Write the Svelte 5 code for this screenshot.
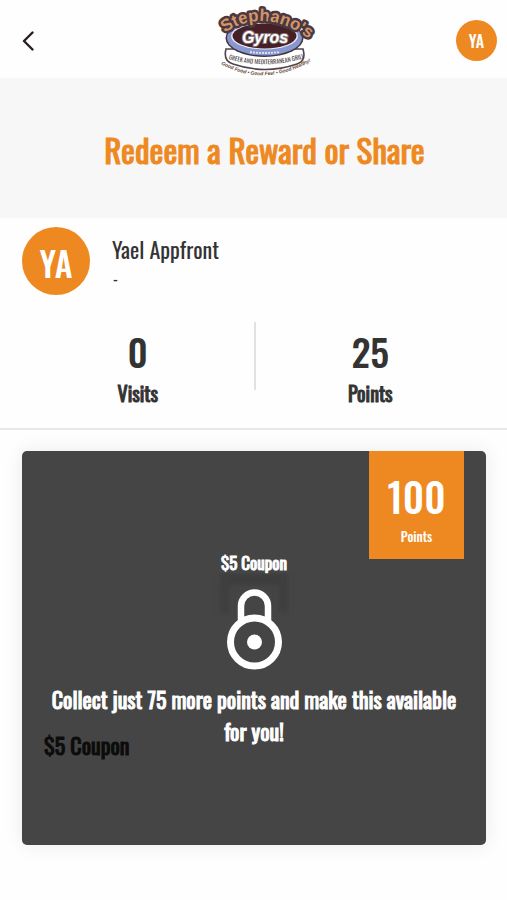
<script lang="ts">
  const user = { name: 'Yael Appfront', initials: 'YA', detail: '-' };

  const stats = [
    { label: 'Visits', value: 0 },
    { label: 'Points', value: 25 }
  ];

  const reward = { title: '$5 Coupon', cost: 100 };

  const missing = $derived(reward.cost - stats[1].value);
</script>

<div class="page">
  <header>
    <button class="back" type="button" aria-label="Back">
      <svg viewBox="0 0 12 20" width="12" height="20" fill="none">
        <path d="M10.5 1.5 2 10l8.5 8.5" stroke="#2b1c22" stroke-width="2.4" stroke-linecap="round" stroke-linejoin="round" />
      </svg>
    </button>

    <a class="logo" href="/" aria-label="Stephano's Gyros">
      <svg viewBox="0 0 100 76" width="100" height="76">
        <defs>
          <path id="arc-name" d="M6 32Q46 3 94 38" />
          <path id="arc-kind" d="M8 56Q49 69 91 55" />
          <path id="arc-motto" d="M0 60Q47 88 98 57" />
        </defs>
        <path
          d="M9 47C7 55 9 60 16 62Q48 73 80 62C87 60 88 54 86 47Z"
          fill="#fff"
          stroke="#51434d"
          stroke-width="1.6"
        />
        <ellipse cx="47.500" cy="36" rx="39" ry="19" fill="#45333d" />
        <ellipse cx="47.500" cy="36" rx="37.500" ry="17.500" fill="#8798d0" />
        <ellipse cx="47.500" cy="34" rx="33.500" ry="13.500" fill="#eee9ee" />
        <ellipse cx="47.500" cy="34" rx="32" ry="12.500" fill="#452026" />
        <text class="name"><textPath href="#arc-name" startOffset="50%" text-anchor="middle">Stephano's</textPath></text>
        <text class="gyros" x="48" y="41" text-anchor="middle">Gyros</text>
        <path d="M33 50Q48 52 63 50" fill="none" stroke="#dfe3f4" stroke-width="1.8" stroke-dasharray="2 1" />
        <text class="kind"><textPath href="#arc-kind" startOffset="50%" text-anchor="middle">GREEK AND MEDITERRANEAN GRILL</textPath></text>
        <text class="motto"><textPath href="#arc-motto" startOffset="50%" text-anchor="middle">Good Food • Good Feel • Good Healthy!</textPath></text>
      </svg>
    </a>

    <button class="avatar small" type="button">{user.initials}</button>
  </header>

  <section class="hero">
    <h1>Redeem a Reward or Share</h1>
  </section>

  <section class="profile">
    <div class="person">
      <div class="avatar large">{user.initials}</div>
      <div class="who">
        <h2>{user.name}</h2>
        <p>{user.detail}</p>
      </div>
    </div>

    <dl class="stats">
      {#each stats as stat (stat.label)}
        <div class="stat">
          <dt>{stat.label}</dt>
          <dd>{stat.value}</dd>
        </div>
      {/each}
    </dl>
  </section>

  <main>
    <article class="card">
      <h3>{reward.title}</h3>

      <div class="locked">
        <p class="title">{reward.title}</p>
        <svg class="lock" viewBox="0 0 80 100" width="80" height="100" fill="none">
          <defs>
            <filter id="soft"><feGaussianBlur stdDeviation="3" /></filter>
          </defs>
          <path d="M6 0h68v40h-9V12H15v28H6z" fill="#3c3c3c" filter="url(#soft)" />
          <path d="M27 50V33a13.500 13.500 0 0 1 27 0v17" stroke="#fff" stroke-width="6.500" />
          <circle cx="40.500" cy="69" r="24" stroke="#fff" stroke-width="7" />
          <circle cx="40.500" cy="69" r="7.500" fill="#fff" />
        </svg>
        <p class="hint">Collect just {missing} more points and make this available for you!</p>
      </div>

      <div class="cost">
        <strong>{reward.cost}</strong>
        <span>Points</span>
      </div>
    </article>
  </main>
</div>

<style>
  :global(body) {
    margin: 0;
    background: #fefefe;
  }
  .page {
    --orange: #ee8922;
    --ink: #333;
    font-family: Oswald, 'Liberation Sans Narrow', 'Liberation Sans', sans-serif;
    font-weight: 400;
    color: var(--ink);
  }
  h1,
  h2,
  h3,
  p,
  dl,
  dd {
    margin: 0;
    font-weight: 400;
  }
  /* heavier strokes on the regular, narrower letters */
  h1,
  h3,
  dt,
  .title,
  .hint {
    -webkit-text-stroke: 1px currentColor;
  }
  button {
    border: 0;
    padding: 0;
    font-family: inherit;
    cursor: pointer;
  }
  header {
    display: grid;
    grid-template-columns: 1fr auto 1fr;
    align-items: center;
    padding: 2px 10px 0 22px;
    height: 76px;
  }
  .back {
    justify-self: start;
    display: flex;
    padding-top: 2px;
    background: none;
  }
  .logo {
    display: flex;
    margin-left: 14px;
  }
  .name {
    font: bold 17px 'Liberation Sans', sans-serif;
    fill: #d29568;
    stroke: #4c3840;
    stroke-width: 5px;
    stroke-linejoin: round;
    paint-order: stroke;
  }
  .gyros {
    font: italic bold 16px 'Liberation Sans', sans-serif;
    fill: #fff;
    stroke: #8a777c;
    stroke-width: 2px;
    paint-order: stroke;
  }
  .kind {
    font: 400 6px Oswald, 'Liberation Sans Narrow', sans-serif;
    fill: #4b4548;
  }
  .motto {
    font: italic bold 5px 'Liberation Sans', sans-serif;
    fill: #67452f;
  }
  .avatar {
    display: grid;
    place-items: center;
    border-radius: 50%;
    background: var(--orange);
    color: #fff;
    font-weight: 500;
  }
  .small {
    justify-self: end;
    width: 41px;
    height: 41px;
    padding-top: 2px;
    font-size: 16px;
  }
  .large {
    width: 68px;
    height: 68px;
    box-sizing: border-box;
    padding-top: 2px;
    font-size: 34px;
  }
  .hero {
    padding: 48px 0 44px 22px;
    background: #f7f7f7;
    text-align: center;
  }
  h1 {
    font-size: 33px;
    line-height: 48px;
    color: var(--orange);
  }
  .profile {
    border-bottom: 2px solid #e8e8e8;
    padding: 9px 0 38px;
  }
  .person {
    display: flex;
    gap: 22px;
    padding: 0 22px;
  }
  .who {
    padding-top: 6px;
  }
  h2 {
    font-size: 22px;
    line-height: 32px;
  }
  .who p {
    padding-left: 1px;
    font-size: 16px;
    line-height: 28px;
  }
  .stats {
    display: grid;
    grid-template-columns: 1fr 1fr;
    padding: 27px 22px 0;
  }
  .stat {
    display: flex;
    flex-direction: column-reverse;
    justify-content: flex-end;
    align-items: center;
    height: 68px;
  }
  .stat + .stat {
    border-left: 2px solid #e2e2e2;
  }
  dt {
    font-size: 20px;
    line-height: 26px;
  }
  dd {
    font-size: 38px;
    line-height: 58px;
    font-weight: 500;
  }
  main {
    padding: 21px 21px 48px 22px;
  }
  .card {
    position: relative;
    box-sizing: border-box;
    min-height: 394px;
    padding: 278px 22px 0;
    border-radius: 5px;
    background: #454545;
    box-shadow: 0 0 20px rgba(0, 0, 0, 0.08);
  }
  h3 {
    font-size: 22px;
    line-height: 32px;
    color: #0c0c0c;
  }
  .locked {
    position: absolute;
    inset: 0;
    display: flex;
    flex-direction: column;
    align-items: center;
    padding: 100px 22px 0;
    color: #fff;
    text-align: center;
  }
  .title {
    font-size: 17px;
    line-height: 24px;
  }
  .lock {
    display: block;
    flex-shrink: 0;
    margin-top: -2px;
  }
  .hint {
    padding-top: 10px;
    font-size: 22px;
    line-height: 32px;
  }
  .cost {
    position: absolute;
    top: 0;
    right: 22px;
    display: flex;
    flex-direction: column;
    align-items: center;
    box-sizing: border-box;
    width: 95px;
    height: 108px;
    padding-top: 17px;
    background: var(--orange);
    color: #fff;
  }
  .cost strong {
    font-size: 40px;
    line-height: 56px;
    font-weight: 500;
  }
  .cost span {
    font-size: 13px;
    line-height: 24px;
    font-weight: 500;
  }
</style>
